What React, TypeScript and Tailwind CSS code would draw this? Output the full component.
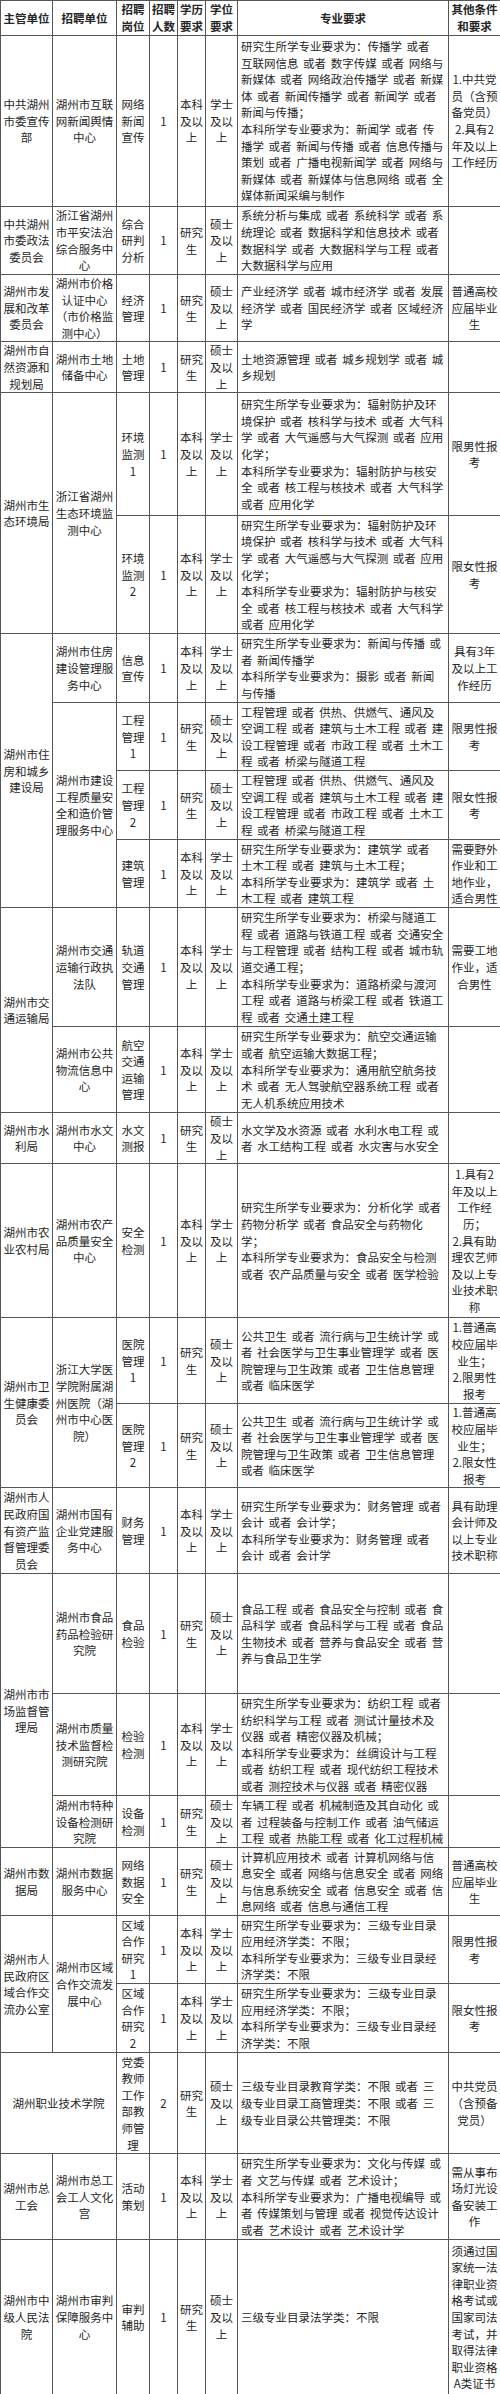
import React from 'react';

type Span = { t: string; rs?: number; cs?: number };

type Row = {
  h: string;
  org?: Span;
  unit?: Span;
  post: string;
  num: string;
  edu: string;
  deg: string;
  major: string;
  other: string;
};

// 常用的学历/学位写法
const BK = '本科|及以|上';
const XS = '学士|及以|上';
const YJS = '研究|生';
const SS = '硕士|及以|上';

const ROWS: Row[] = [
  {
    h: 'h-[171px]',
    org: { t: '中共湖州|市委宣传|部' },
    unit: { t: '湖州市互联|网新闻舆情|中心' },
    post: '网络|新闻|宣传',
    num: '1',
    edu: BK,
    deg: XS,
    major:
      '研究生所学专业要求为：传播学 或者|互联网信息 或者 数字传媒 或者 网络与|新媒体 或者 网络政治传播学 或者 新媒|体 或者 新闻传播学 或者 新闻学 或者|新闻与传播；|本科所学专业要求为：新闻学 或者 传|播学 或者 新闻与传播 或者 信息传播与|策划 或者 广播电视新闻学 或者 网络与|新媒体 或者 新媒体与信息网络 或者 全|媒体新闻采编与制作',
    other: '1.中共党|员（含预|备党员）|2.具有2|年及以上|工作经历',
  },
  {
    h: 'h-[68px]',
    org: { t: '中共湖州|市委政法|委员会' },
    unit: { t: '浙江省湖州|市平安法治|综合服务中|心' },
    post: '综合|研判|分析',
    num: '1',
    edu: YJS,
    deg: SS,
    major:
      '系统分析与集成 或者 系统科学 或者 系|统理论 或者 数据科学和信息技术 或者|数据科学 或者 大数据科学与工程 或者|大数据科学与应用',
    other: '',
  },
  {
    h: 'h-[67px]',
    org: { t: '湖州市发|展和改革|委员会' },
    unit: { t: '湖州市价格|认证中心|（市价格监|测中心）' },
    post: '经济|管理',
    num: '1',
    edu: YJS,
    deg: SS,
    major: '产业经济学 或者 城市经济学 或者 发展|经济学 或者 国民经济学 或者 区域经济|学',
    other: '普通高校|应届毕业|生',
  },
  {
    h: 'h-[51px]',
    org: { t: '湖州市自|然资源和|规划局' },
    unit: { t: '湖州市土地|储备中心' },
    post: '土地|管理',
    num: '1',
    edu: YJS,
    deg: SS,
    major: '土地资源管理 或者 城乡规划学 或者 城|乡规划',
    other: '',
  },
  {
    h: 'h-[123px]',
    org: { t: '湖州市生|态环境局', rs: 2 },
    unit: { t: '浙江省湖州|生态环境监|测中心', rs: 2 },
    post: '环境|监测|1',
    num: '1',
    edu: BK,
    deg: XS,
    major:
      '研究生所学专业要求为：辐射防护及环|境保护 或者 核科学与技术 或者 大气科|学 或者 大气遥感与大气探测 或者 应用|化学；|本科所学专业要求为：辐射防护与核安|全 或者 核工程与核技术 或者 大气科学|或者 应用化学',
    other: '限男性报|考',
  },
  {
    h: 'h-[118px]',
    post: '环境|监测|2',
    num: '1',
    edu: BK,
    deg: XS,
    major:
      '研究生所学专业要求为：辐射防护及环|境保护 或者 核科学与技术 或者 大气科|学 或者 大气遥感与大气探测 或者 应用|化学；|本科所学专业要求为：辐射防护与核安|全 或者 核工程与核技术 或者 大气科学|或者 应用化学',
    other: '限女性报|考',
  },
  {
    h: 'h-[69px]',
    org: { t: '湖州市住|房和城乡|建设局', rs: 4 },
    unit: { t: '湖州市住房|建设管理服|务中心' },
    post: '信息|宣传',
    num: '1',
    edu: BK,
    deg: XS,
    major: '研究生所学专业要求为：新闻与传播 或|者 新闻传播学|本科所学专业要求为：摄影 或者 新闻|与传播',
    other: '具有3年|及以上工|作经历',
  },
  {
    h: 'h-[68px]',
    unit: { t: '湖州市建设|工程质量安|全和造价管|理服务中心', rs: 3 },
    post: '工程|管理|1',
    num: '1',
    edu: YJS,
    deg: SS,
    major:
      '工程管理 或者 供热、供燃气、通风及|空调工程 或者 建筑与土木工程 或者 建|设工程管理 或者 市政工程 或者 土木工|程 或者 桥梁与隧道工程',
    other: '限男性报|考',
  },
  {
    h: 'h-[69px]',
    post: '工程|管理|2',
    num: '1',
    edu: YJS,
    deg: SS,
    major:
      '工程管理 或者 供热、供燃气、通风及|空调工程 或者 建筑与土木工程 或者 建|设工程管理 或者 市政工程 或者 土木工|程 或者 桥梁与隧道工程',
    other: '限女性报|考',
  },
  {
    h: 'h-[68px]',
    post: '建筑|管理',
    num: '1',
    edu: BK,
    deg: XS,
    major: '研究生所学专业要求为：建筑学 或者|土木工程 或者 建筑与土木工程；|本科所学专业要求为：建筑学 或者 土|木工程 或者 建筑工程',
    other: '需要野外|作业和工|地作业，|适合男性',
  },
  {
    h: 'h-[119px]',
    org: { t: '湖州市交|通运输局', rs: 2 },
    unit: { t: '湖州市交通|运输行政执|法队' },
    post: '轨道|交通|管理',
    num: '1',
    edu: BK,
    deg: XS,
    major:
      '研究生所学专业要求为：桥梁与隧道工|程 或者 道路与铁道工程 或者 交通安全|与工程管理 或者 结构工程 或者 城市轨|道交通工程；|本科所学专业要求为：道路桥梁与渡河|工程 或者 道路与桥梁工程 或者 铁道工|程 或者 交通土建工程',
    other: '需要工地|作业，适|合男性',
  },
  {
    h: 'h-[86px]',
    unit: { t: '湖州市公共|物流信息中|心' },
    post: '航空|交通|运输|管理',
    num: '1',
    edu: BK,
    deg: XS,
    major:
      '研究生所学专业要求为：航空交通运输|或者 航空运输大数据工程；|本科所学专业要求为：通用航空航务技|术 或者 无人驾驶航空器系统工程 或者|无人机系统应用技术',
    other: '',
  },
  {
    h: 'h-[51px]',
    org: { t: '湖州市水|利局' },
    unit: { t: '湖州市水文|中心' },
    post: '水文|测报',
    num: '1',
    edu: YJS,
    deg: SS,
    major: '水文学及水资源 或者 水利水电工程 或|者 水工结构工程 或者 水灾害与水安全',
    other: '',
  },
  {
    h: 'h-[154px]',
    org: { t: '湖州市农|业农村局' },
    unit: { t: '湖州市农产|品质量安全|中心' },
    post: '安全|检测',
    num: '1',
    edu: BK,
    deg: XS,
    major:
      '研究生所学专业要求为：分析化学 或者|药物分析学 或者 食品安全与药物化|学；|本科所学专业要求为：食品安全与检测|或者 农产品质量与安全 或者 医学检验',
    other: '1.具有2|年及以上|工作经|历；|2.具有助|理农艺师|及以上专|业技术职|称',
  },
  {
    h: 'h-[86px]',
    org: { t: '湖州市卫|生健康委|员会', rs: 2 },
    unit: { t: '浙江大学医|学院附属湖|州医院（湖|州市中心医|院）', rs: 2 },
    post: '医院|管理|1',
    num: '1',
    edu: YJS,
    deg: SS,
    major:
      '公共卫生 或者 流行病与卫生统计学 或|者 社会医学与卫生事业管理学 或者 医|院管理与卫生政策 或者 卫生信息管理|或者 临床医学',
    other: '1.普通高|校应届毕|业生；|2.限男性|报考',
  },
  {
    h: 'h-[84px]',
    post: '医院|管理|2',
    num: '1',
    edu: YJS,
    deg: SS,
    major:
      '公共卫生 或者 流行病与卫生统计学 或|者 社会医学与卫生事业管理学 或者 医|院管理与卫生政策 或者 卫生信息管理|或者 临床医学',
    other: '1.普通高|校应届毕|业生；|2.限女性|报考',
  },
  {
    h: 'h-[86px]',
    org: { t: '湖州市人|民政府国|有资产监|督管理委|员会' },
    unit: { t: '湖州市国有|企业党建服|务中心' },
    post: '财务|管理',
    num: '1',
    edu: BK,
    deg: XS,
    major: '研究生所学专业要求为：财务管理 或者|会计 或者 会计学；|本科所学专业要求为：财务管理 或者|会计 或者 会计学',
    other: '具有助理|会计师及|以上专业|技术职称',
  },
  {
    h: 'h-[120px]',
    org: { t: '湖州市市|场监督管|理局', rs: 3 },
    unit: { t: '湖州市食品|药品检验研|究院' },
    post: '食品|检验',
    num: '1',
    edu: YJS,
    deg: SS,
    major:
      '食品工程 或者 食品安全与控制 或者 食|品科学 或者 食品科学与工程 或者 食品|生物技术 或者 营养与食品安全 或者 营|养与食品卫生学',
    other: '',
  },
  {
    h: 'h-[102px]',
    unit: { t: '湖州市质量|技术监督检|测研究院' },
    post: '检验|检测',
    num: '1',
    edu: BK,
    deg: XS,
    major:
      '研究生所学专业要求为：纺织工程 或者|纺织科学与工程 或者 测试计量技术及|仪器 或者 精密仪器及机械；|本科所学专业要求为：丝绸设计与工程|或者 纺织工程 或者 现代纺织工程技术|或者 测控技术与仪器 或者 精密仪器',
    other: '',
  },
  {
    h: 'h-[52px]',
    unit: { t: '湖州市特种|设备检测研|究院' },
    post: '设备|检测',
    num: '1',
    edu: YJS,
    deg: SS,
    major: '车辆工程 或者 机械制造及其自动化 或|者 过程装备与控制工作 或者 油气储运|工程 或者 热能工程 或者 化工过程机械',
    other: '',
  },
  {
    h: 'h-[68px]',
    org: { t: '湖州市数|据局' },
    unit: { t: '湖州市数据|服务中心' },
    post: '网络|数据|安全',
    num: '1',
    edu: YJS,
    deg: SS,
    major:
      '计算机应用技术 或者 计算机网络与信|息安全 或者 网络与信息安全 或者 网络|与信息系统安全 或者 信息安全 或者 信|息网络 或者 信息与通信工程',
    other: '普通高校|应届毕业|生',
  },
  {
    h: 'h-[68px]',
    org: { t: '湖州市人|民政府区|域合作交|流办公室', rs: 2 },
    unit: { t: '湖州市区域|合作交流发|展中心', rs: 2 },
    post: '区域|合作|研究|1',
    num: '1',
    edu: BK,
    deg: XS,
    major: '研究生所学专业要求为：三级专业目录|应用经济学类：不限；|本科所学专业要求为：三级专业目录经|济学类：不限',
    other: '限男性报|考',
  },
  {
    h: 'h-[69px]',
    post: '区域|合作|研究|2',
    num: '1',
    edu: BK,
    deg: XS,
    major: '研究生所学专业要求为：三级专业目录|应用经济学类：不限；|本科所学专业要求为：三级专业目录经|济学类：不限',
    other: '限女性报|考',
  },
  {
    h: 'h-[101px]',
    org: { t: '湖州职业技术学院', cs: 2 },
    post: '党委|教师|工作|部教|师管|理',
    num: '2',
    edu: YJS,
    deg: SS,
    major: '三级专业目录教育学类：不限 或者 三|级专业目录工商管理类：不限 或者 三|级专业目录公共管理类：不限',
    other: '中共党员|（含预备|党员）',
  },
  {
    h: 'h-[86px]',
    org: { t: '湖州市总|工会' },
    unit: { t: '湖州市总工|会工人文化|宫' },
    post: '活动|策划',
    num: '1',
    edu: BK,
    deg: XS,
    major:
      '研究生所学专业要求为：文化与传媒 或|者 文艺与传媒 或者 艺术设计；|本科所学专业要求为：广播电视编导 或|者 传媒策划与管理 或者 视觉传达设计|或者 艺术设计 或者 艺术设计学',
    other: '需从事布|场灯光设|备安装工|作',
  },
  {
    h: 'h-[155px]',
    org: { t: '湖州市中|级人民法|院' },
    unit: { t: '湖州市审判|保障服务中|心' },
    post: '审判|辅助',
    num: '1',
    edu: YJS,
    deg: SS,
    major: '三级专业目录法学类：不限',
    other: '须通过国|家统一法|律职业资|格考试或|国家司法|考试，并|取得法律|职业资格|A类证书',
  },
];

const cellBase = 'border border-[#555] align-middle';

function Lines({ text }: { text: string }) {
  if (!text) return null;
  return (
    <>
      {text.split('|').map((line, i) => (
        <div key={i} className="whitespace-nowrap">
          {line}
        </div>
      ))}
    </>
  );
}

function C({ text, rs, cs }: { text: string; rs?: number; cs?: number }) {
  return (
    <td rowSpan={rs} colSpan={cs} className={`${cellBase} text-center`}>
      <Lines text={text} />
    </td>
  );
}

export default function App() {
  return (
    <div className="w-[500px] bg-white text-[#262626] text-[11.5px] leading-[16.6px] font-['Noto_Sans_CJK_SC','Noto_Sans',sans-serif]">
      <table className="w-[500px] table-fixed border-collapse">
        <colgroup>
          <col className="w-[52px]" />
          <col className="w-[64px]" />
          <col className="w-[33px]" />
          <col className="w-[28px]" />
          <col className="w-[28px]" />
          <col className="w-[32px]" />
          <col className="w-[211px]" />
          <col className="w-[52px]" />
        </colgroup>
        <thead>
          <tr className="h-[35px] font-bold">
            <C text="主管单位" />
            <C text="招聘单位" />
            <C text="招聘|岗位" />
            <C text="招聘|人数" />
            <C text="学历|要求" />
            <C text="学位|要求" />
            <C text="专业要求" />
            <C text="其他条件|和要求" />
          </tr>
        </thead>
        <tbody>
          {ROWS.map((r, i) => (
            <tr key={i} className={r.h}>
              {r.org && <C text={r.org.t} rs={r.org.rs} cs={r.org.cs} />}
              {r.unit && <C text={r.unit.t} rs={r.unit.rs} />}
              <C text={r.post} />
              <C text={r.num} />
              <C text={r.edu} />
              <C text={r.deg} />
              <td className={`${cellBase} pl-[3px] text-left [word-spacing:2px]`}>
                <Lines text={r.major} />
              </td>
              <C text={r.other} />
            </tr>
          ))}
        </tbody>
      </table>
    </div>
  );
}
